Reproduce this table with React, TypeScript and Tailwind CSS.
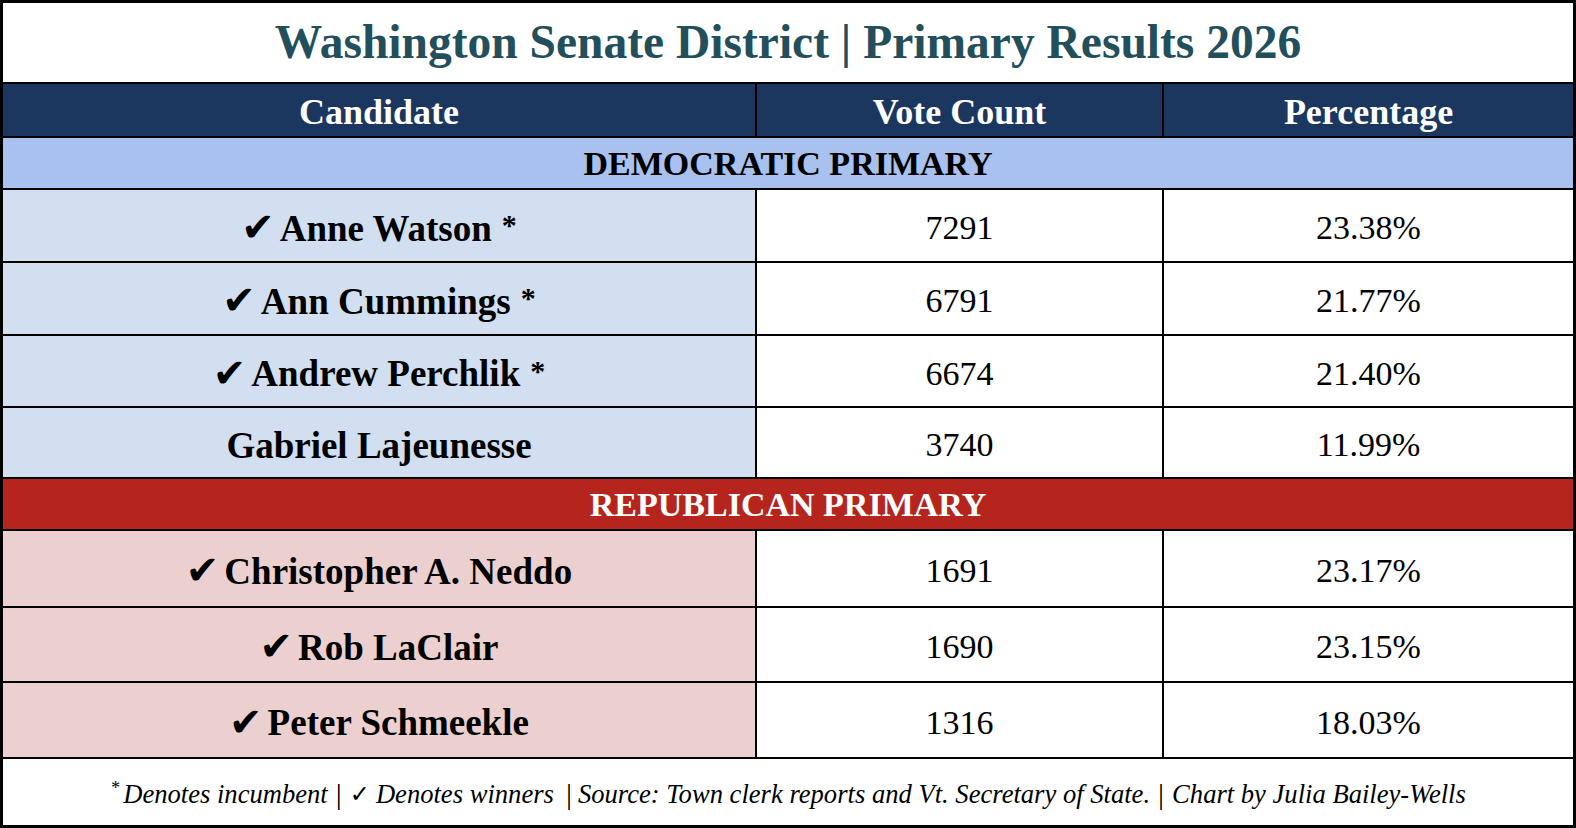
import React from 'react';

interface Candidate {
  name: string;
  winner: boolean;
  incumbent: boolean;
  votes: string;
  pct: string;
}

const DEMOCRATS: Candidate[] = [
  { name: 'Anne Watson', winner: true, incumbent: true, votes: '7291', pct: '23.38%' },
  { name: 'Ann Cummings', winner: true, incumbent: true, votes: '6791', pct: '21.77%' },
  { name: 'Andrew Perchlik', winner: true, incumbent: true, votes: '6674', pct: '21.40%' },
  { name: 'Gabriel Lajeunesse', winner: false, incumbent: false, votes: '3740', pct: '11.99%' },
];

const REPUBLICANS: Candidate[] = [
  { name: 'Christopher A. Neddo', winner: true, incumbent: false, votes: '1691', pct: '23.17%' },
  { name: 'Rob LaClair', winner: true, incumbent: false, votes: '1690', pct: '23.15%' },
  { name: 'Peter Schmeekle', winner: true, incumbent: false, votes: '1316', pct: '18.03%' },
];

const CandidateRow: React.FC<{ c: Candidate; tint: string }> = ({ c, tint }) => (
  <>
    <div className={`${tint} flex items-center justify-center pt-[5px] text-[37px] font-bold text-black`}>
      {c.winner && <span className="font-['DejaVu_Sans',sans-serif] text-[40px] mr-[5px] -translate-y-[1px]">✔</span>}
      <span>{c.name}</span>
      {c.incumbent && <span className="ml-[10px] text-[30px] -translate-y-[3px]">*</span>}
    </div>
    <div className="bg-white flex items-center justify-center pt-[5px] text-[34px] text-black">{c.votes}</div>
    <div className="bg-white flex items-center justify-center pt-[5px] text-[34px] text-black">{c.pct}</div>
  </>
);

const App: React.FC = () => {
  return (
    <div className="w-[1576px] h-[828px] bg-black p-[3px] font-['Liberation_Serif',serif] leading-none">
      <div className="grid h-full gap-[2px] grid-cols-[752px_405px_1fr] grid-rows-[79px_52px_50px_71px_71px_70px_69px_50px_75px_73px_74px_66px]">
        <div className="col-span-3 bg-white flex items-center justify-center text-[47.5px] font-bold text-[#234f5c]">
          Washington Senate District | Primary Results 2026
        </div>

        {['Candidate', 'Vote Count', 'Percentage'].map(h => (
          <div key={h} className="bg-[#1b375f] flex items-center justify-center pt-[3px] text-[36px] font-bold text-white">
            {h}
          </div>
        ))}

        <div className="col-span-3 bg-[#a8c1ee] flex items-center justify-center pt-[2px] text-[34px] font-bold text-black">
          DEMOCRATIC PRIMARY
        </div>
        {DEMOCRATS.map(c => (
          <CandidateRow key={c.name} c={c} tint="bg-[#d1dff0]" />
        ))}

        <div className="col-span-3 bg-[#b5251d] flex items-center justify-center pt-[2px] text-[34px] font-bold text-white">
          REPUBLICAN PRIMARY
        </div>
        {REPUBLICANS.map(c => (
          <CandidateRow key={c.name} c={c} tint="bg-[#ecd0d0]" />
        ))}

        {/* footer notes */}
        <div className="col-span-3 bg-white flex items-center justify-center pt-[4px] text-[26.6px] italic text-black">
          <span className="text-[18px] -translate-y-[6px] mr-[4px]">*</span>
          Denotes incumbent
          <span className="not-italic mx-[8px] text-[30px]">|</span>
          <span className="font-['DejaVu_Sans',sans-serif] not-italic text-[24px] mr-[6px]">✓</span>
          Denotes winners
          <span className="not-italic ml-[12px] mr-[6px] text-[30px]">|</span>
          Source: Town clerk reports and Vt. Secretary of State.
          <span className="not-italic mx-[8px] text-[30px]">|</span>
          Chart by Julia Bailey-Wells
        </div>
      </div>
    </div>
  );
};

export default App;
